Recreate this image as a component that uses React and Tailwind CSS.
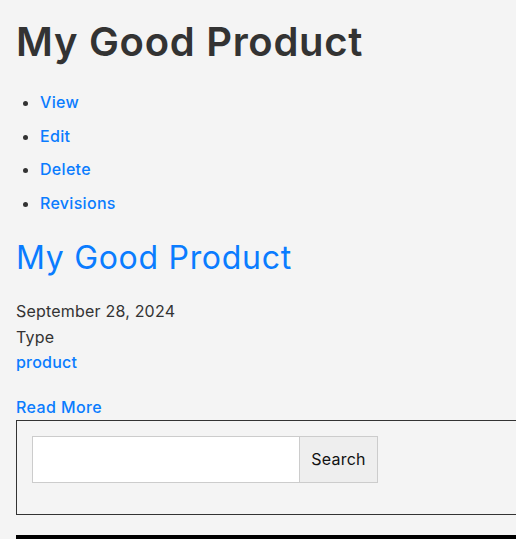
export default function App() {
  const links = ['View', 'Edit', 'Delete', 'Revisions'];

  return (
    <div className="min-h-[539px] overflow-hidden bg-[#f4f4f4] font-['Inter',sans-serif] text-[#333]">
      <div className="w-[640px] px-4 pt-[14px]">
        <h1 className="text-[40px] font-semibold leading-[56px] tracking-[0.7px] text-[#333]">My Good Product</h1>

        <ul className="mt-[20px] list-disc pl-6 marker:text-[#333]">
          {links.map((label) => (
            <li key={label} className="h-[33.5px] text-[16px] font-medium leading-[24px] tracking-[0.3px]">
              <a href="#" className="text-[#0a7cff]">{label}</a>
            </li>
          ))}
        </ul>

        <h2 className="mt-[12px] text-[32px] leading-[44px] tracking-[0.7px] text-[#0a7cff]">My Good Product</h2>

        <div className="mt-[19px] text-[16px] leading-[25.5px] tracking-[0.2px]">
          <p>September 28, 2024</p>
          <p>Type</p>
          <a href="#" className="font-medium text-[#0a7cff]">product</a>
        </div>

        <a href="#" className="mt-[21px] block text-[16px] font-medium leading-[20px] tracking-[0.4px] text-[#0a7cff]">
          Read More
        </a>

        <div className="mt-[3px] h-[95px] border border-[#333] px-[15px] pt-[15px]">
          <form className="flex" onSubmit={(e) => e.preventDefault()}>
            <input
              type="text"
              className="h-[47px] w-[268px] border border-[#ccc] bg-white px-2 outline-none"
            />
            <button
              type="submit"
              className="h-[47px] w-[78px] border border-l-0 border-[#ccc] bg-[#eee] text-[16px] tracking-[0.2px] text-[#111]"
            >
              Search
            </button>
          </form>
        </div>

        <div className="mt-[20px] h-[8px] bg-black" />
      </div>
    </div>
  );
}
